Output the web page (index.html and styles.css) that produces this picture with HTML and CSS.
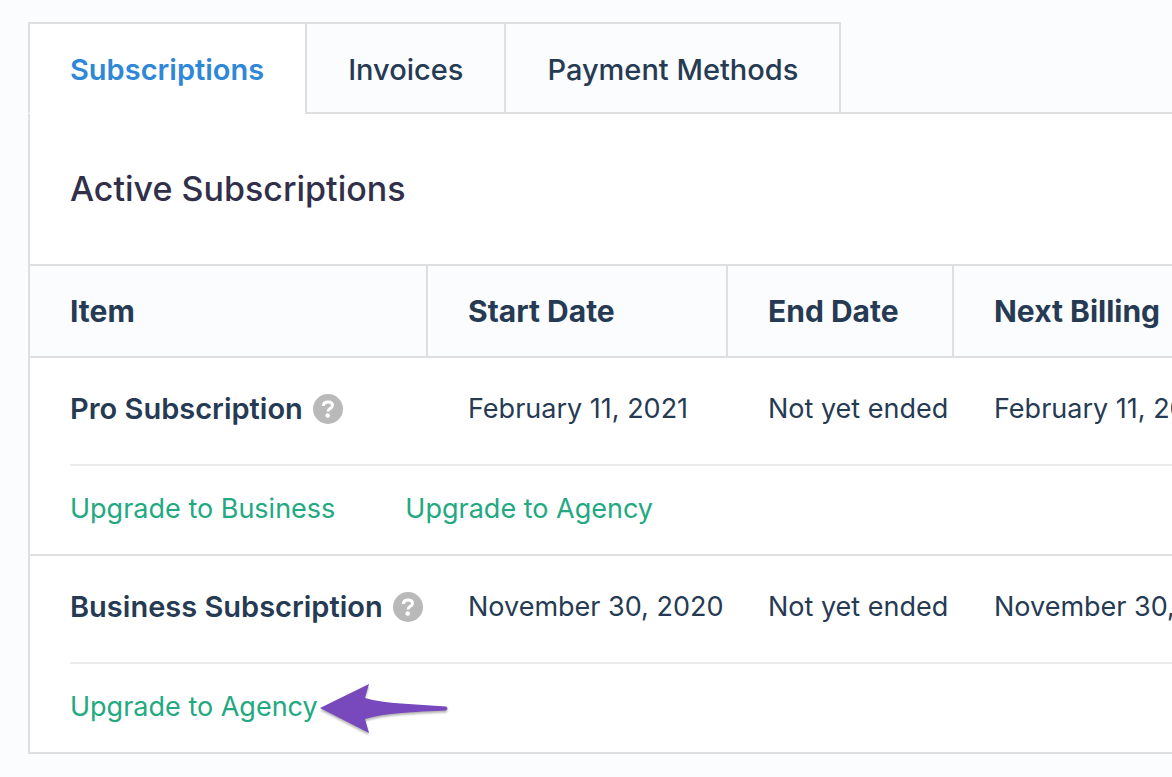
FILE: index.html
```html
<!DOCTYPE html>
<html lang="en">
<head>
  <meta charset="UTF-8">
  <title>Subscriptions</title>
  <link rel="stylesheet" href="styles.css">
</head>
<body>

<div class="account">
  <!-- Tabs -->
  <div class="tabs" role="tablist">
    <button class="tab active" role="tab" aria-selected="true">Subscriptions</button>
    <button class="tab" role="tab" aria-selected="false">Invoices</button>
    <button class="tab" role="tab" aria-selected="false">Payment Methods</button>
  </div>

  <div class="panel">
    <h2>Active Subscriptions</h2>

    <table>
      <colgroup>
        <col class="col-item">
        <col class="col-start">
        <col class="col-end">
        <col>
      </colgroup>
      <thead>
        <tr>
          <th>Item</th>
          <th>Start Date</th>
          <th>End Date</th>
          <th>Next Billing</th>
        </tr>
      </thead>
      <tbody>
        <tr>
          <td class="item">
            <div class="item-name">
              <span>Pro Subscription</span>
              <button class="help" aria-label="Help">
                <svg viewBox="0 0 30 30"><circle cx="15" cy="15" r="15" fill="#b9b9b9"/><path d="M10.3 12C10.4 9.400 12.200 8 15 8C17.800 8 19.500 9.400 19.500 11.600C19.500 14.400 15 14.300 15 17.600" fill="none" stroke="#fff" stroke-width="3"/><circle cx="14.700" cy="21.500" r="2.300" fill="#fff"/></svg>
              </button>
            </div>
          </td>
          <td>February 11, 2021</td>
          <td>Not yet ended</td>
          <td>February 11, 2022</td>
        </tr>
        <tr>
          <td class="upgrades" colspan="4">
            <div class="links">
              <a href="#">Upgrade to Business</a>
              <a href="#">Upgrade to Agency</a>
            </div>
          </td>
        </tr>
        <tr>
          <td class="item">
            <div class="item-name">
              <span>Business Subscription</span>
              <button class="help" aria-label="Help">
                <svg viewBox="0 0 30 30"><circle cx="15" cy="15" r="15" fill="#b9b9b9"/><path d="M10.3 12C10.4 9.400 12.200 8 15 8C17.800 8 19.500 9.400 19.500 11.600C19.500 14.400 15 14.300 15 17.600" fill="none" stroke="#fff" stroke-width="3"/><circle cx="14.700" cy="21.500" r="2.300" fill="#fff"/></svg>
              </button>
            </div>
          </td>
          <td>November 30, 2020</td>
          <td>Not yet ended</td>
          <td>November 30, 2021</td>
        </tr>
        <tr>
          <td class="upgrades" colspan="4">
            <div class="links">
              <a href="#" class="pointed">Upgrade to Agency
                <svg class="arrow" viewBox="0 0 130 52"><path d="M2 25L51 1L47 15C67 21 97 21 128 23.500Q131 25.500 128 27.500C97 29 67 30 47 36L51 50Z" fill="#7848bd"/></svg>
              </a>
            </div>
          </td>
        </tr>
      </tbody>
    </table>
  </div>
</div>

</body>
</html>
```
FILE: styles.css
```css
* {
  box-sizing: border-box;
}
body {
  font-family: Inter, "Liberation Sans", sans-serif;
  background: #fbfcfe;
  color: #263b53;
  margin: 0;
  overflow-x: hidden;
}
.account {
  padding: 22px 0 22px 28px;
}
button {
  font-family: inherit;
  color: inherit;
  cursor: pointer;
}
.tabs {
  display: flex;
  position: relative;
  margin-bottom: -2px;
}
.tab {
  padding: 28px 41px 24px;
  border: 2px solid #dfdfe1;
  border-right: none;
  background: #fbfcfe;
  font-size: 29px;
  font-weight: 500;
  line-height: 36px;
}
.tab:last-child {
  border-right: 2px solid #dfdfe1;
}
.tab.active {
  padding-left: 40px;
  border-bottom-color: #fff;
  background: #fff;
  color: #2f87d8;
  font-weight: 600;
}
.panel {
  background: #fff;
  border: 2px solid #dfdfe1;
  border-right: none;
}
h2 {
  margin: 0;
  padding: 52px 40px;
  color: #322f4a;
  font-size: 34px;
  font-weight: 500;
  line-height: 46px;
}
table {
  width: 100%;
  table-layout: fixed;
  border-collapse: separate;
  border-spacing: 0;
}
.col-item {
  width: 398px;
}
.col-start {
  width: 300px;
}
.col-end {
  width: 226px;
}
th {
  height: 94px;
  padding: 0 0 0 40px;
  border-top: 2px solid #dfdfe1;
  border-bottom: 2px solid #dfdfe1;
  border-right: 2px solid #dfdfe1;
  background: #fbfcfe;
  font-size: 30px;
  font-weight: 700;
  text-align: left;
  white-space: nowrap;
}
th:last-child {
  border-right: none;
}
td {
  height: 106px;
  padding: 0 0 4px 40px;
  font-size: 27px;
  line-height: 36px;
  white-space: nowrap;
}
.item {
  font-size: 29px;
  font-weight: 600;
}
.item-name {
  display: flex;
  align-items: center;
  gap: 10px;
}
.help {
  width: 30px;
  height: 30px;
  padding: 0;
  border: none;
  background: none;
  flex: none;
}
.help svg {
  display: block;
}
.upgrades {
  height: 92px;
  padding-bottom: 0;
  border-bottom: 2px solid #dfdfe1;
}
tr:last-child .upgrades {
  height: 90px;
  border-bottom: none;
}
.links {
  display: flex;
  gap: 70px;
  height: 90px;
  padding-top: 25px;
  border-top: 2px solid #ebebeb;
}
.links a {
  color: #22a981;
  text-decoration: none;
}
.pointed {
  position: relative;
}
/* Arrow pointing at the upgrade link */
.arrow {
  position: absolute;
  left: 100%;
  top: -6px;
  width: 130px;
  height: 52px;
  filter: drop-shadow(0 2px 1px rgba(0,0,0,0.3));
}
```
